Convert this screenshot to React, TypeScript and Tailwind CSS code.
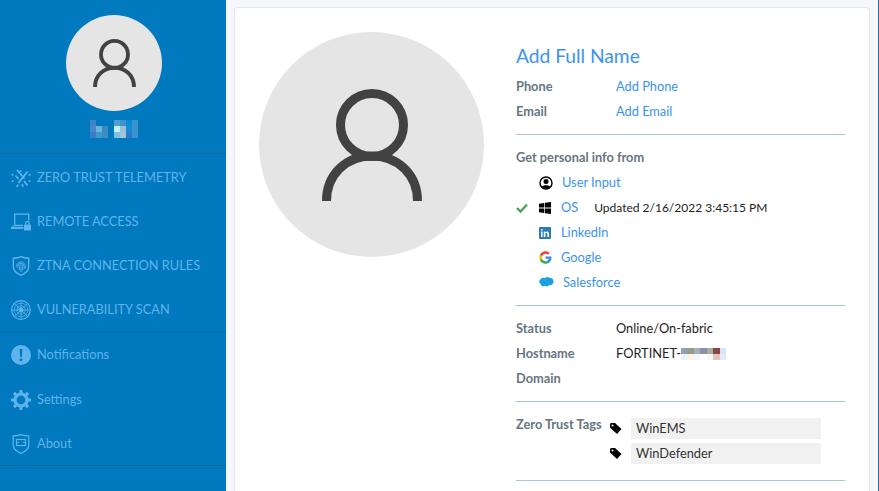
import { FC, ReactNode } from "react";

const navIcon = "w-[20px] h-[20px] shrink-0 text-[#5fb4ec]";

const ZeroTrustIcon = () => (
  <svg viewBox="0 0 20 20" className={navIcon} fill="none" stroke="currentColor" strokeWidth="1.700">
    <path d="M6 2l7.500 8.500M16.500 3.500L7.500 15M13 13l3.500 4.500M4.500 7.500l3 3.500M9.500 2.500v1.500" />
    <path d="M7 16.500l-1 2.500M11 16l1 3M.5 6.500l1.800.8M19.500 6.500l-1.800.8M.8 13.500l1.800-.8M19.500 13.500l-1.800-.8" />
  </svg>
);

const RemoteIcon = () => (
  <svg viewBox="0 0 20 20" className={navIcon} fill="none" stroke="currentColor" strokeWidth="1.300">
    <path d="M3.700 13.500V2.200h14V8.500M3.700 13.500h8.300" />
    <path d="M0 16h12.500" strokeWidth="1.800" />
    <path d="M3 13.800L1 15.500" />
    <rect x="13" y="12.500" width="7" height="6" rx="0.500" fill="currentColor" stroke="none" />
    <path d="M14.800 12.500v-1.500a1.700 1.700 0 0 1 3.400 0v1.500" />
  </svg>
);

const FingerShieldIcon = () => (
  <svg viewBox="0 0 20 20" className={navIcon} fill="none" stroke="currentColor" strokeWidth="0.900">
    <path d="M10 .7c2.600 1.200 5.200 1.500 7.700 1.500v8.600c0 3.900-3.500 6.700-7.700 8.500-4.200-1.800-7.700-4.600-7.700-8.500V2.200C4.800 2.200 7.400 1.900 10 .7z" strokeWidth="1.400" />
    <path d="M5.500 10.500a4.500 4.500 0 0 1 9 0v1.500M6.800 12v-1.500a3.200 3.200 0 0 1 6.400 0v2.500M8.300 14v-3.500a1.700 1.700 0 0 1 3.400 0v4M10 10.500v5.500" />
  </svg>
);

const RadarIcon = () => (
  <svg viewBox="0 0 20 20" className={navIcon} fill="none" stroke="currentColor" strokeWidth="0.800">
    <circle cx="10" cy="10" r="9.400" strokeWidth="1.200" />
    <circle cx="10" cy="10" r="6.800" />
    <circle cx="10" cy="10" r="4.200" />
    <path d="M10 .5v19M.5 10h19M3.300 3.300l13.400 13.400M16.700 3.300L3.300 16.700" />
    <circle cx="10" cy="10" r="2.200" fill="currentColor" />
  </svg>
);

const AlertIcon = () => (
  <svg viewBox="0 0 20 20" className={navIcon}>
    <circle cx="10" cy="10" r="10" fill="currentColor" />
    <path d="M8.600 4h2.800l-.5 8h-1.800z" fill="#0079be" />
    <circle cx="10" cy="14.800" r="1.400" fill="#0079be" />
  </svg>
);

const GearIcon = () => (
  <svg viewBox="0 0 20 20" className={navIcon} fill="none" stroke="currentColor">
    <circle cx="10" cy="10" r="6" strokeWidth="3.200" />
    <path d="M10 0v3M10 17v3M0 10h3M17 10h3M2.900 2.900L5 5M15 15l2.100 2.100M17.100 2.900L15 5M5 15l-2.100 2.100" strokeWidth="3" />
  </svg>
);

const AboutIcon = () => (
  <svg viewBox="0 0 20 20" className={navIcon} fill="none" stroke="currentColor" strokeWidth="1.200">
    <path d="M10 .6c2.700 1 5.300 1.300 7.800 1.300v9c0 4.100-3.500 6.500-7.800 8.500-4.300-2-7.800-4.400-7.800-8.500v-9C4.700 1.900 7.300 1.600 10 .6z" />
    <rect x="5.500" y="5.500" width="9" height="6" />
    <path d="M5.500 8.500h2.500M12 8.500h2.500" />
  </svg>
);

const PersonIcon: FC<{ className: string }> = ({ className }) => (
  <svg viewBox="0 0 100 112" className={className} fill="none" stroke="#424242" strokeWidth="9">
    <circle cx="50" cy="36" r="31.500" />
    <path d="M4.500 112c0-26 19-45 45.500-45s45.500 19 45.500 45" />
  </svg>
);

const BlurName = () => (
  <div className="grid grid-cols-8 w-[48px] h-[18px]">
    <div className="bg-[#3f86c9]" />
    <div className="bg-[#0078bd]" />
    <div className="bg-[#0078bd]" />
    <div className="bg-[#0078bd]" />
    <div className="bg-[#4f9fd2]" />
    <div className="bg-[#3d93cc]" />
    <div className="bg-[#0a8ad2]" />
    <div className="bg-[#3a93cd]" />
    <div className="bg-[#4a86c8]" />
    <div className="bg-[#6db4dc]" />
    <div className="bg-[#3a8cc0]" />
    <div className="bg-[#0078bd]" />
    <div className="bg-[#c4eef8]" />
    <div className="bg-[#98c4d8]" />
    <div className="bg-[#1a88d0]" />
    <div className="bg-[#3a93cd]" />
    <div className="bg-[#3a7fc4]" />
    <div className="bg-[#3a9ad0]" />
    <div className="bg-[#3d8cc0]" />
    <div className="bg-[#0078bd]" />
    <div className="bg-[#80c0e0]" />
    <div className="bg-[#a0c4d8]" />
    <div className="bg-[#2a78cc]" />
    <div className="bg-[#3a93cd]" />
  </div>
);

const BlurHost = () => (
  <div className="inline-grid grid-cols-7 w-[45px] h-[12px]">
    <div className="bg-[#8fa3b0]" />
    <div className="bg-[#979a8c]" />
    <div className="bg-[#a3b0bc]" />
    <div className="bg-[#8c8fa8]" />
    <div className="bg-[#a3b0a0]" />
    <div className="bg-[#8a4545]" />
    <div className="bg-[#d6e6f8]" />
    <div className="bg-[#eaf3fb]" />
    <div className="bg-[#fdf3e6]" />
    <div className="bg-[#f3f6fb]" />
    <div className="bg-white" />
    <div className="bg-[#f6f6f0]" />
    <div className="bg-[#e3c2c0]" />
    <div className="bg-[#e0ecfa]" />
  </div>
);

const NavItem: FC<{ icon: ReactNode; label: string; height: string }> = ({ icon, label, height }) => (
  <div className={`flex items-center gap-[6px] pl-[11px] ${height}`}>
    {icon}
    <span className="text-[12.8px] text-[#5fb4ec]">{label}</span>
  </div>
);

const InfoRow: FC<{ label: string; children?: ReactNode }> = ({ label, children }) => (
  <div className="flex items-center h-[25px] text-[12.8px]">
    <span className="w-[100px] font-bold text-[#66757f]">{label}</span>
    {children}
  </div>
);

const SourceRow: FC<{ check?: boolean; icon: ReactNode; children: ReactNode }> = ({ check, icon, children }) => (
  <div className="flex items-center h-[25px] text-[12.8px]">
    <div className="w-[23px] shrink-0 flex">
      {check && (
        <svg viewBox="0 0 12 10" className="w-[12px] h-[10px]">
          <path d="M1 5l3.500 3.500L11 1.500" fill="none" stroke="#4ea35a" strokeWidth="2.400" />
        </svg>
      )}
    </div>
    <div className="w-[22px] shrink-0 flex">{icon}</div>
    {children}
  </div>
);

const Divider: FC<{ className: string }> = ({ className }) => (
  <div className={`h-px bg-[#adc3cf] ${className}`} />
);

const TagRow: FC<{ label: string }> = ({ label }) => (
  <div className="flex items-center">
    <svg viewBox="0 0 12 11" className="w-[12px] h-[11px] mr-[9px]">
      <path d="M0 1.500C0 .7.700 0 1.500 0H5l6.500 6L7 11 0 4.500z" fill="#000" />
      <circle cx="2.500" cy="2.500" r="1" fill="#fff" />
    </svg>
    <div className="w-[190px] h-[21px] bg-[#f1f1f1] pl-[5px] flex items-center text-[12.8px] text-[#333]">
      {label}
    </div>
  </div>
);

const App: FC = () => {
  return (
    <div className="flex w-[879px] h-[491px] overflow-hidden bg-[#f6f7fb] font-['Lato','Liberation_Sans',sans-serif]">
      <aside className="w-[226px] shrink-0 bg-[#0079be]">
        <div className="h-[154px] border-b border-[#0a669f] flex flex-col items-center pt-[15px] pl-[2px]">
          <div className="w-[96px] h-[96px] rounded-full bg-[#e5e5e5] flex items-center justify-center">
            <PersonIcon className="w-[43px] h-[48px]" />
          </div>
          <div className="mt-[9px]">
            <BlurName />
          </div>
        </div>
        <div className="h-[178px] border-b border-[#0a669f] pt-[2px]">
          <NavItem icon={<ZeroTrustIcon />} label="ZERO TRUST TELEMETRY" height="h-[44px]" />
          <NavItem icon={<RemoteIcon />} label="REMOTE ACCESS" height="h-[44px]" />
          <NavItem icon={<FingerShieldIcon />} label="ZTNA CONNECTION RULES" height="h-[44px]" />
          <NavItem icon={<RadarIcon />} label="VULNERABILITY SCAN" height="h-[43px]" />
        </div>
        <div className="h-[134px] border-b border-[#0a669f] pt-[1px]">
          <NavItem icon={<AlertIcon />} label="Notifications" height="h-[44px]" />
          <NavItem icon={<GearIcon />} label="Settings" height="h-[45px]" />
          <NavItem icon={<AboutIcon />} label="About" height="h-[43px]" />
        </div>
      </aside>

      <main className="flex-1 pl-[8px] pr-[8px] pt-[7px]">
        <div className="flex h-[520px] w-[636px] bg-white border border-[#dfe8f0] rounded-[4px] pl-[24px] pt-[24px]">
          <div className="w-[225px] h-[225px] shrink-0 rounded-full bg-[#e5e5e5] flex items-center justify-center">
            <PersonIcon className="w-[100px] h-[112px]" />
          </div>
          <div className="ml-[32px] w-[329px] -mt-[1px]">
            <div className="text-[19.2px] leading-[26px] mt-[12px] text-[#3b93f0]">Add Full Name</div>
            <div className="mt-[5px]">
              <InfoRow label="Phone">
                <span className="text-[#3b93f0]">Add Phone</span>
              </InfoRow>
              <InfoRow label="Email">
                <span className="text-[#3b93f0]">Add Email</span>
              </InfoRow>
            </div>
            <Divider className="mt-[10px]" />
            <div className="mt-[10px] h-[25px] flex items-center text-[12.8px] font-bold text-[#66757f]">
              Get personal info from
            </div>
            <SourceRow
              icon={
                <svg viewBox="0 0 14 14" className="w-[14px] h-[14px]">
                  <circle cx="7" cy="7" r="6" fill="#fff" stroke="#000" strokeWidth="1.400" />
                  <circle cx="7" cy="5.500" r="2.500" fill="#000" />
                  <path d="M2.500 11c1-2.500 8-2.500 9 0l-2 2h-5z" fill="#000" />
                </svg>
              }
            >
              <span className="ml-[1px] text-[#3b93f0]">User Input</span>
            </SourceRow>
            <SourceRow
              check
              icon={
                <svg viewBox="0 0 12 12" className="w-[12px] h-[12px]">
                  <path d="M0 1.700l5.300-.8v4.700H0zM6 .8L12 0v5.600H6zM0 6.400h5.300v4.700L0 10.300zM6 6.400h6V12l-6-.8z" fill="#000" />
                </svg>
              }
            >
              <span className="text-[#3b93f0]">OS</span>
              <span className="ml-[16px] text-[12px] text-[#222]">Updated 2/16/2022 3:45:15 PM</span>
            </SourceRow>
            <SourceRow
              icon={
                <svg viewBox="0 0 12 12" className="w-[12px] h-[12px]">
                  <rect width="12" height="12" rx="1" fill="#2b7bb9" />
                  <path d="M2 4.500h1.600V10H2zM2 2h1.600v1.500H2zM4.800 4.500h1.500v.8c.8-1.300 3.700-1.300 3.700 1.200V10H8.400V7c0-1.400-2-1.400-2 0v3H4.800z" fill="#fff" />
                </svg>
              }
            >
              <span className="text-[#3b93f0]">LinkedIn</span>
            </SourceRow>
            <SourceRow
              icon={
                <svg viewBox="0 0 24 24" className="w-[13px] h-[13px]">
                  <path d="M23 12.300c0-.8-.1-1.600-.2-2.300H12v4.300h6.200c-.3 1.400-1.100 2.600-2.300 3.400v2.800h3.700c2.200-2 3.400-5 3.400-8.200z" fill="#4285f4" />
                  <path d="M12 23.500c3.100 0 5.700-1 7.600-2.800l-3.700-2.800c-1 .7-2.300 1.100-3.900 1.100-3 0-5.500-2-6.400-4.700H1.800v2.900c1.900 3.800 5.800 6.300 10.200 6.300z" fill="#34a853" />
                  <path d="M5.600 14.300c-.5-1.400-.5-3 0-4.500V6.900H1.800c-1.600 3.200-1.600 7 0 10.300z" fill="#fbbc05" />
                  <path d="M12 5c1.700 0 3.200.6 4.400 1.700l3.300-3.300C17.700 1.500 15 .5 12 .5 7.600.5 3.700 3 1.800 6.900l3.800 2.900C6.500 7 9 5 12 5z" fill="#ea4335" />
                </svg>
              }
            >
              <span className="text-[#3b93f0]">Google</span>
            </SourceRow>
            <SourceRow
              icon={
                <svg viewBox="0 0 16 12" className="w-[15px] h-[12px] -mt-[1px]">
                  <path d="M6.500 2C7.800.3 10 .5 10.800 1.700c2.200-.7 4.700 1 4.700 3.800 0 3-2.700 4.700-5 3.900-1 1.700-3.200 1.800-4.200.7C4.700 11.200 2 10.300 1.800 8 0 7.200-.3 4.400 1.600 3.100 2.800 1.200 5.300 1 6.500 2z" fill="#1a9fe0" />
                </svg>
              }
            >
              <span className="ml-[2px] text-[#3b93f0]">Salesforce</span>
            </SourceRow>
            <Divider className="mt-[10px]" />
            <div className="mt-[10px]">
              <InfoRow label="Status">
                <span className="text-[#222]">Online/On-fabric</span>
              </InfoRow>
              <InfoRow label="Hostname">
                <span className="text-[#222]">FORTINET-</span>
                <BlurHost />
              </InfoRow>
              <InfoRow label="Domain" />
            </div>
            <Divider className="mt-[10px]" />
            <div className="flex mt-[16px]">
              <span className="w-[94px] text-[12.8px] leading-[12px] font-bold text-[#66757f]">Zero Trust Tags</span>
              <div className="flex flex-col gap-[4px]">
                <TagRow label="WinEMS" />
                <TagRow label="WinDefender" />
              </div>
            </div>
            <Divider className="mt-[16px]" />
          </div>
        </div>
      </main>
      <div className="w-px shrink-0 bg-[#2a6ea8]" />
    </div>
  );
};

export default App;
